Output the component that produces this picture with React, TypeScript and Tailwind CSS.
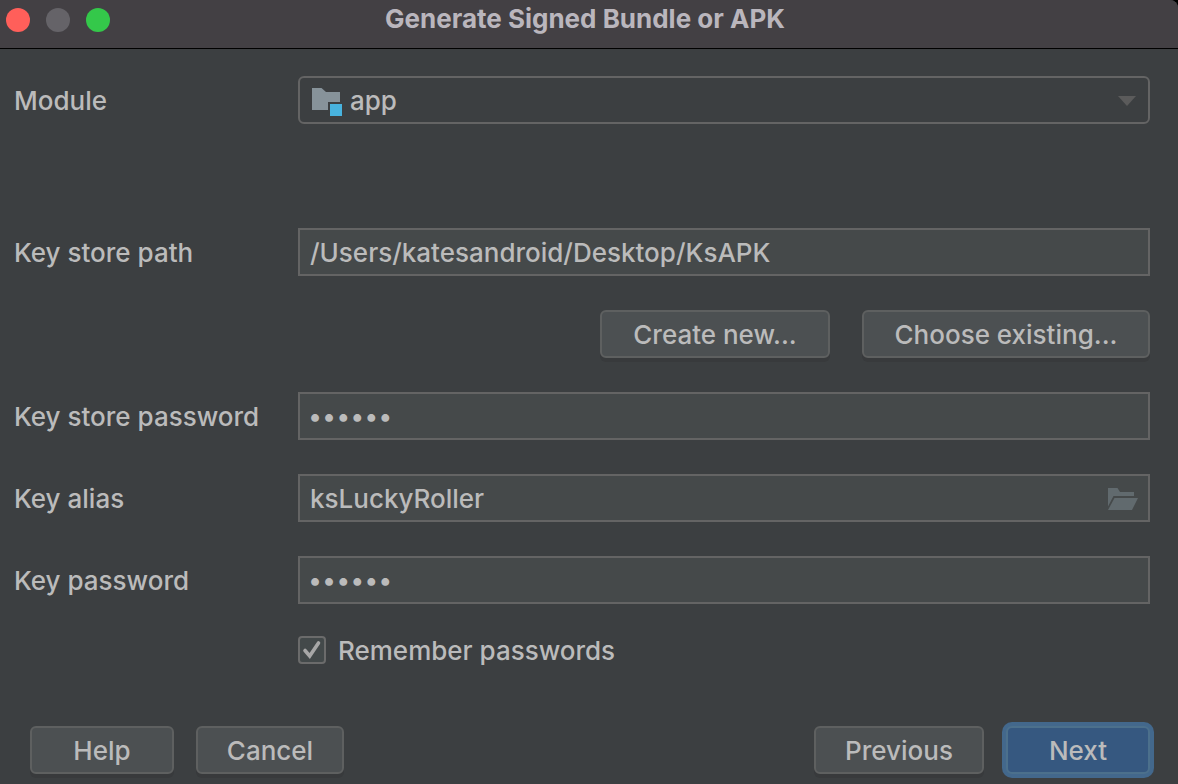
import { useState, type ReactNode } from "react";

function FieldRow({ id, label, children }: { id: string; label: string; children: ReactNode }) {
  return (
    <div className="grid grid-cols-[284px_1fr] items-center">
      <label htmlFor={id} className="whitespace-nowrap pt-0.5">
        {label}
      </label>
      <div className="relative">{children}</div>
    </div>
  );
}

const inputClass =
  "block h-12 w-full border-2 border-[#646464] bg-[#45494a] px-2.5 text-[#bbbbbb] outline-none";
const passwordClass =
  "block h-12 w-full border-2 border-[#646464] bg-[#45494a] px-2 text-[25px] font-normal text-[#bbbbbb] outline-none";
const buttonClass =
  "h-12 rounded-md border-2 border-[#5e6060] bg-[#4c5052] pt-0.5 text-[#bbbbbb] shadow-[0_4px_0_#383a3c] whitespace-nowrap";

function ModuleIcon() {
  return (
    <svg viewBox="0 0 30 28" className="pointer-events-none absolute left-3.5 top-3 h-7 w-[30px]" aria-hidden="true">
      <path d="M0 0H9.5L14 4H28V14H16V22H0Z" fill="#87939a" />
      <rect x="18" y="16" width="12" height="12" fill="#48b3de" />
    </svg>
  );
}

function OpenFolderIcon() {
  return (
    <svg viewBox="0 0 30 22" className="h-[22px] w-[30px]" aria-hidden="true">
      <path d="M0 0H9.5L12 4H26V8H5.5L0 18.5Z" fill="#616a6e" />
      <path d="M6.5 10H30L24 22H0Z" fill="#616a6e" />
    </svg>
  );
}

export default function App() {
  const [path, setPath] = useState("/Users/katesandroid/Desktop/KsAPK");
  const [storePassword, setStorePassword] = useState("secret");
  const [alias, setAlias] = useState("ksLuckyRoller");
  const [keyPassword, setKeyPassword] = useState("secret");
  const [remember, setRemember] = useState(true);

  return (
    <div className="min-h-screen bg-black font-['Inter',sans-serif] text-[26px] font-medium leading-8 text-[#bbbbbb]">
      <div className="flex min-h-screen flex-col overflow-hidden rounded-tr-lg bg-[#3c3f41]">
        <header className="grid h-[49px] grid-cols-[110px_1fr_118px] items-start border-b border-black bg-[#434044]">
          <div className="flex gap-4 pl-1.5 pt-2">
            <button type="button" aria-label="Close" className="size-6 rounded-full bg-[#ff5f5a]" />
            <button type="button" aria-label="Minimize" className="size-6 rounded-full bg-[#656368]" />
            <button type="button" aria-label="Zoom" className="size-6 rounded-full bg-[#34c84a]" />
          </div>
          <h1 className="whitespace-nowrap pt-[3px] text-center text-[26px] font-bold leading-8 text-[#bab6bd]">
            Generate Signed Bundle or APK
          </h1>
        </header>

        <form className="flex flex-1 flex-col" onSubmit={(e) => e.preventDefault()}>
          <div className="flex flex-col pl-3.5 pr-7 pt-[27px]">
            <FieldRow id="module" label="Module">
              <select
                id="module"
                className="block h-12 w-full appearance-none rounded-md border-2 border-[#646464] bg-[#3c3f41] pl-[50px] pr-12 pt-0.5 text-[#bbbbbb] outline-none"
              >
                <option>app</option>
              </select>
              <ModuleIcon />
              <svg viewBox="0 0 18 10" className="pointer-events-none absolute right-3.5 top-5 h-2.5 w-[18px]" aria-hidden="true">
                <path d="M0 0H18L9 10Z" fill="#5b5b5b" />
              </svg>
            </FieldRow>

            <div className="mt-[104px] flex flex-col gap-[34px]">
              <FieldRow id="path" label="Key store path">
                <input id="path" type="text" className={inputClass} value={path} onChange={(e) => setPath(e.target.value)} />
              </FieldRow>

              <div className="flex justify-end gap-8">
                <button type="button" className={`${buttonClass} w-[230px]`}>
                  Create new...
                </button>
                <button type="button" className={`${buttonClass} w-72`}>
                  Choose existing...
                </button>
              </div>

              <FieldRow id="store-password" label="Key store password">
                <input
                  id="store-password"
                  type="password"
                  className={passwordClass}
                  value={storePassword}
                  onChange={(e) => setStorePassword(e.target.value)}
                />
              </FieldRow>

              <FieldRow id="alias" label="Key alias">
                <input id="alias" type="text" className={inputClass} value={alias} onChange={(e) => setAlias(e.target.value)} />
                <button type="button" aria-label="Browse key aliases" className="absolute right-3 top-3.5">
                  <OpenFolderIcon />
                </button>
              </FieldRow>

              <FieldRow id="key-password" label="Key password">
                <input
                  id="key-password"
                  type="password"
                  className={passwordClass}
                  value={keyPassword}
                  onChange={(e) => setKeyPassword(e.target.value)}
                />
              </FieldRow>
            </div>

            <div className="mt-[29px] grid grid-cols-[284px_1fr]">
              <label className="col-start-2 flex items-center gap-3">
                <span className="relative flex size-7">
                  <input
                    type="checkbox"
                    checked={remember}
                    onChange={(e) => setRemember(e.target.checked)}
                    className="size-7 appearance-none rounded border-2 border-[#6b6b6b] bg-[#43494a]"
                  />
                  {remember && (
                    <svg viewBox="0 0 28 28" className="pointer-events-none absolute inset-0 size-7" aria-hidden="true">
                      <path d="M7 14.5L11.7 20L20.5 7" fill="none" stroke="#a7a7a7" strokeWidth="3.6" strokeLinecap="round" />
                    </svg>
                  )}
                </span>
                <span className="pt-0.5">Remember passwords</span>
              </label>
            </div>
          </div>

          <footer className="mt-auto flex justify-between pb-2.5 pl-[30px] pr-7">
            <div className="flex gap-[22px]">
              <button type="button" className={`${buttonClass} w-36`}>
                Help
              </button>
              <button type="button" className={`${buttonClass} w-[148px]`}>
                Cancel
              </button>
            </div>
            <div className="flex gap-[22px]">
              <button type="button" className={`${buttonClass} w-[170px]`}>
                Previous
              </button>
              <button
                type="submit"
                className="h-12 w-36 rounded-md border-2 border-[#4c708c] bg-[#365880] pt-0.5 text-[#bbbbbb] ring-4 ring-[#43688c]"
              >
                Next
              </button>
            </div>
          </footer>
        </form>
      </div>
    </div>
  );
}
